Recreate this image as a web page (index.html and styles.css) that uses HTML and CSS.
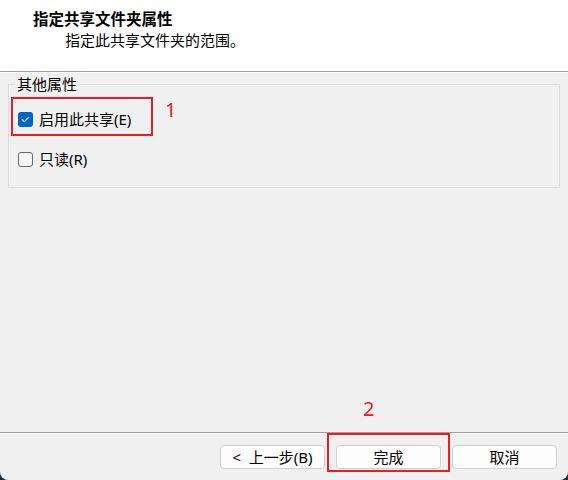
FILE: index.html
```html
<!DOCTYPE html>
<html lang="zh-CN">
<head>
<meta charset="utf-8">
<title>指定共享文件夹属性</title>
<link rel="stylesheet" href="styles.css">
</head>
<body>
<div class="window">
  <header class="header">
    <div class="title">指定共享文件夹属性</div>
    <div class="subtitle">指定此共享文件夹的范围。</div>
  </header>
  <main class="content">
    <fieldset class="group">
      <legend class="legend">其他属性</legend>
      <label class="row">
        <span class="box checked">
          <svg width="15" height="15" viewBox="0 0 15 15"><path d="M4.3 7.6 L6.4 9.7 L10.7 5.4" fill="none" stroke="#fff" stroke-width="1.1" stroke-linecap="round" stroke-linejoin="round"/></svg>
        </span>
        <span class="text">启用此共享(E)</span>
      </label>
      <label class="row">
        <span class="box"></span>
        <span class="text">只读(R)</span>
      </label>
    </fieldset>
  </main>
  <footer class="footer">
    <button class="btn">&lt;&nbsp; 上一步(B)</button>
    <button class="btn">完成</button>
    <button class="btn">取消</button>
  </footer>
  <div class="mark mark-box1"></div>
  <div class="mark-num num1">1</div>
  <div class="mark mark-box2"></div>
  <div class="mark-num num2">2</div>
</div>
</body>
</html>
```

FILE: styles.css
```css
* { box-sizing: border-box; }
html, body { margin: 0; padding: 0; }
body {
  width: 568px;
  height: 480px;
  background: #1c2a33;
  font-family: "Noto Sans", "Noto Sans CJK SC", sans-serif;
  font-size: 15px;
  color: #000;
  overflow: hidden;
}
.window {
  position: relative;
  width: 568px;
  height: 480px;
  background: #f0f0f0;
  border-radius: 0 0 8px 8px;
  display: flex;
  flex-direction: column;
  overflow: hidden;
}
.header {
  height: 72px;
  flex: none;
  background: #fff;
  border-bottom: 1px solid #a0a0a0;
  box-shadow: 0 1px 0 #fff;
  padding: 7px 0 0 33px;
}
.title {
  font-family: "Noto Sans CJK SC", sans-serif;
  font-weight: bold;
  font-size: 15.5px;
  line-height: 22px;
}
.subtitle {
  font-family: "Noto Sans CJK SC", sans-serif;
  font-size: 15px;
  line-height: 22px;
  padding-left: 32px;
}
.content {
  flex: 1;
  padding: 2px 8px 0 8px;
}
.group {
  margin: 0;
  padding: 13px 9px 16px 9px;
  border: 1px solid #dcdcdc;
  display: flex;
  flex-direction: column;
  gap: 16px;
  min-width: 0;
}
.legend {
  padding: 0 2px;
  margin-left: -3px;
  line-height: 20px;
  font-family: "Noto Sans CJK SC", sans-serif;
}
.row {
  display: flex;
  align-items: center;
  height: 24px;
  gap: 6px;
}
.box {
  width: 15px;
  height: 15px;
  border-radius: 3px;
  border: 1px solid #6a6a6a;
  background: #f7f7f7;
  display: flex;
  align-items: center;
  justify-content: center;
  flex: none;
}
.box.checked {
  border: none;
  background: #0067c0;
}
.box svg { display: block; }
.text { line-height: 20px; }
.footer {
  height: 48px;
  flex: none;
  border-top: 1px solid #a0a0a0;
  box-shadow: inset 0 1px 0 #fff;
  padding: 12px 11px 0 0;
  display: flex;
  justify-content: flex-end;
  align-items: flex-start;
  gap: 11px;
}
.btn {
  width: 105px;
  height: 24px;
  border: 1px solid #d0d0d0;
  border-radius: 4px;
  background: #fdfdfd;
  font-family: "Noto Sans", "Noto Sans CJK SC", sans-serif;
  font-size: 15px;
  color: #000;
  padding: 0;
  line-height: 22px;
}
.mark {
  position: absolute;
  border: 2px solid #ed1c24;
}
.mark-box1 { left: 11px; top: 97px; width: 142px; height: 39px; }
.mark-box2 { left: 327px; top: 433px; width: 123px; height: 39px; }
.mark-num {
  position: absolute;
  color: #ed1c24;
  font-family: "Noto Sans", sans-serif;
  font-size: 20px;
  line-height: 20px;
}
.num1 { left: 165px; top: 100px; }
.num2 { left: 363px; top: 399px; }
```
